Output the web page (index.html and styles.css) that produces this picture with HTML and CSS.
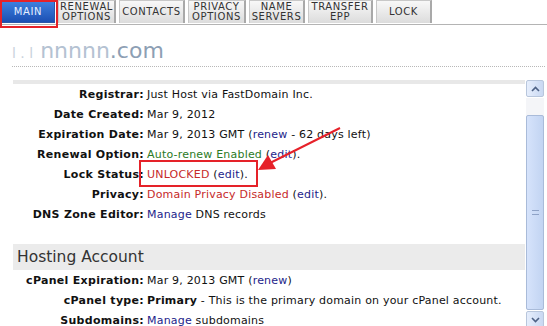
FILE: index.html
```html
<!DOCTYPE html>
<html lang="en">
<head>
    <meta charset="UTF-8">
    <title>Domain Manager</title>
    <link rel="stylesheet" href="styles.css">
</head>
<body>
    <div class="tabs">
        <div class="tab active">MAIN</div>
        <div class="tab w58">RENEWAL<br>OPTIONS</div>
        <div class="tab w66">CONTACTS</div>
        <div class="tab w58">PRIVACY<br>OPTIONS</div>
        <div class="tab w56">NAME<br>SERVERS</div>
        <div class="tab w65">TRANSFER<br>EPP</div>
        <div class="tab w56">LOCK</div>
    </div>

    <h1 class="domain"><span class="hidden">l . l</span>&nbsp;<span class="blur">nnnnn</span>.com</h1>

    <div class="panel">
        <div class="content">
            <div class="topbar"></div>
            <div class="row"><span class="label">Registrar:</span><span class="value">Just Host via FastDomain Inc.</span></div>
            <div class="row"><span class="label">Date Created:</span><span class="value">Mar 9, 2012</span></div>
            <div class="row"><span class="label">Expiration Date:</span><span class="value">Mar 9, 2013 GMT (<a>renew</a> - 62 days left)</span></div>
            <div class="row"><span class="label">Renewal Option:</span><span class="value"><span class="green">Auto-renew Enabled</span> (<a>edit</a>).</span></div>
            <div class="row"><span class="label">Lock Status:</span><span class="value"><span class="red">UNLOCKED</span> (<a>edit</a>).</span></div>
            <div class="row"><span class="label">Privacy:</span><span class="value"><span class="red">Domain Privacy Disabled</span> (<a>edit</a>).</span></div>
            <div class="row"><span class="label">DNS Zone Editor:</span><span class="value"><a>Manage</a> DNS records</span></div>
            <div class="spacer"></div>
            <h2 class="section">Hosting Account</h2>
            <div class="row"><span class="label">cPanel Expiration:</span><span class="value">Mar 9, 2013 GMT (<a>renew</a>)</span></div>
            <div class="row"><span class="label">cPanel type:</span><span class="value"><b>Primary</b> - This is the primary domain on your cPanel account.</span></div>
            <div class="row"><span class="label">Subdomains:</span><span class="value"><a>Manage</a> subdomains</span></div>
        </div>
        <div class="scrollbar">
            <div class="sb-btn">
                <svg width="9" height="6" viewBox="0 0 9 6"><path d="M1 5 L4.5 1.5 L8 5" fill="none" stroke="#4d6185" stroke-width="1.6"/></svg>
            </div>
            <div class="sb-track">
                <div class="sb-thumb"><span class="grip"></span></div>
            </div>
            <div class="sb-btn">
                <svg width="9" height="6" viewBox="0 0 9 6"><path d="M1 1 L4.5 4.5 L8 1" fill="none" stroke="#4d6185" stroke-width="1.6"/></svg>
            </div>
        </div>
    </div>

    <div class="hl-tab"></div>
    <div class="hl-lock"></div>
    <svg class="arrow" width="547" height="326" viewBox="0 0 547 326">
        <line x1="340" y1="128" x2="270" y2="163" stroke="#e62129" stroke-width="2"/>
        <polygon points="258,170 268,155 276,169" fill="#e62129"/>
    </svg>
</body>
</html>
```

FILE: styles.css
```css
body {
    margin: 0;
    background: #ffffff;
    font-family: "DejaVu Sans", Verdana, sans-serif;
    font-size: 11px;
    color: #000;
    width: 547px;
    height: 326px;
    overflow: hidden;
    position: relative;
}
.tabs {
    display: flex;
    gap: 3px;
    padding-left: 1px;
    height: 24px;
    border-bottom: 1px solid #b4b4b4;
}
.tab {
    width: 56px;
    height: 23px;
    box-sizing: border-box;
    display: flex;
    align-items: center;
    justify-content: center;
    text-align: center;
    font-size: 10px;
    line-height: 10px;
    letter-spacing: 0.6px;
    color: #333;
    background: linear-gradient(#f8f8f8, #dcdcdc);
    border: 1px solid #c8c8c8;
    border-right: 2px solid #a9a9a9;
    border-bottom: none;
}
.tab.active {
    width: 54px;
    color: #e8f0ff;
    background: linear-gradient(#3f82e0, #1c4fb3);
    border: 1px solid #2a56a8;
}
.w56 { width: 56px; }
.w58 { width: 58px; }
.w65 { width: 65px; }
.w66 { width: 66px; }
.domain {
    margin: 13px 0 0 12px;
    width: 533px;
    font-size: 22px;
    font-weight: normal;
    line-height: 26px;
    color: #8d9fb4;
    border-bottom: 1px dotted #b8b8b8;
}
.hidden {
    color: #c9d2dc;
    font-size: 14px;
}
.blur {
    color: #b4c2d2;
}
.panel {
    display: flex;
    margin: 13px 0 0 13px;
    height: 248px;
}
.content {
    width: 512px;
}
.topbar {
    height: 4px;
    background: #e8e8e8;
}
.row {
    display: flex;
    align-items: center;
    height: 20px;
    white-space: nowrap;
}
.label {
    width: 131px;
    text-align: right;
    font-weight: bold;
    letter-spacing: 0.3px;
    color: #111;
}
.value {
    margin-left: 3px;
    letter-spacing: 0.2px;
    color: #111;
}
a {
    color: #1d1d8a;
}
.green {
    color: #2b7a25;
}
.red {
    color: #c62a2a;
}
.spacer {
    height: 20px;
}
.section {
    margin: 0;
    height: 26px;
    line-height: 26px;
    padding-left: 4px;
    background: #ebebeb;
    font-size: 15.5px;
    font-weight: normal;
    color: #333;
}
.scrollbar {
    margin-left: 1px;
    width: 18px;
    display: flex;
    flex-direction: column;
    gap: 1px;
}
.sb-btn {
    height: 17px;
    box-sizing: border-box;
    display: flex;
    align-items: center;
    justify-content: center;
    border: 1px solid #b8c6dc;
    border-radius: 2px;
    background: linear-gradient(90deg, #e6eefc, #c9d8f2);
}
.sb-track {
    flex: 1;
    background: #f4f5f8;
    display: flex;
    flex-direction: column;
    padding-top: 17px;
}
.sb-thumb {
    flex: 1;
    border: 1px solid #a9bbd9;
    border-radius: 2px;
    background: linear-gradient(90deg, #d6e3fb, #c2d4f2);
    display: flex;
    align-items: center;
    justify-content: center;
}
.grip {
    width: 7px;
    height: 5px;
    border-top: 1px solid #8ea2c6;
    border-bottom: 1px solid #8ea2c6;
    box-sizing: border-box;
}
.hl-tab {
    position: absolute;
    left: 0;
    top: 0;
    width: 58px;
    height: 28px;
    box-sizing: border-box;
    border: 2px solid #e52229;
}
.hl-lock {
    position: absolute;
    left: 139px;
    top: 160px;
    width: 119px;
    height: 27px;
    box-sizing: border-box;
    border: 2px solid #e52229;
}
.arrow {
    position: absolute;
    left: 0;
    top: 0;
}
```
